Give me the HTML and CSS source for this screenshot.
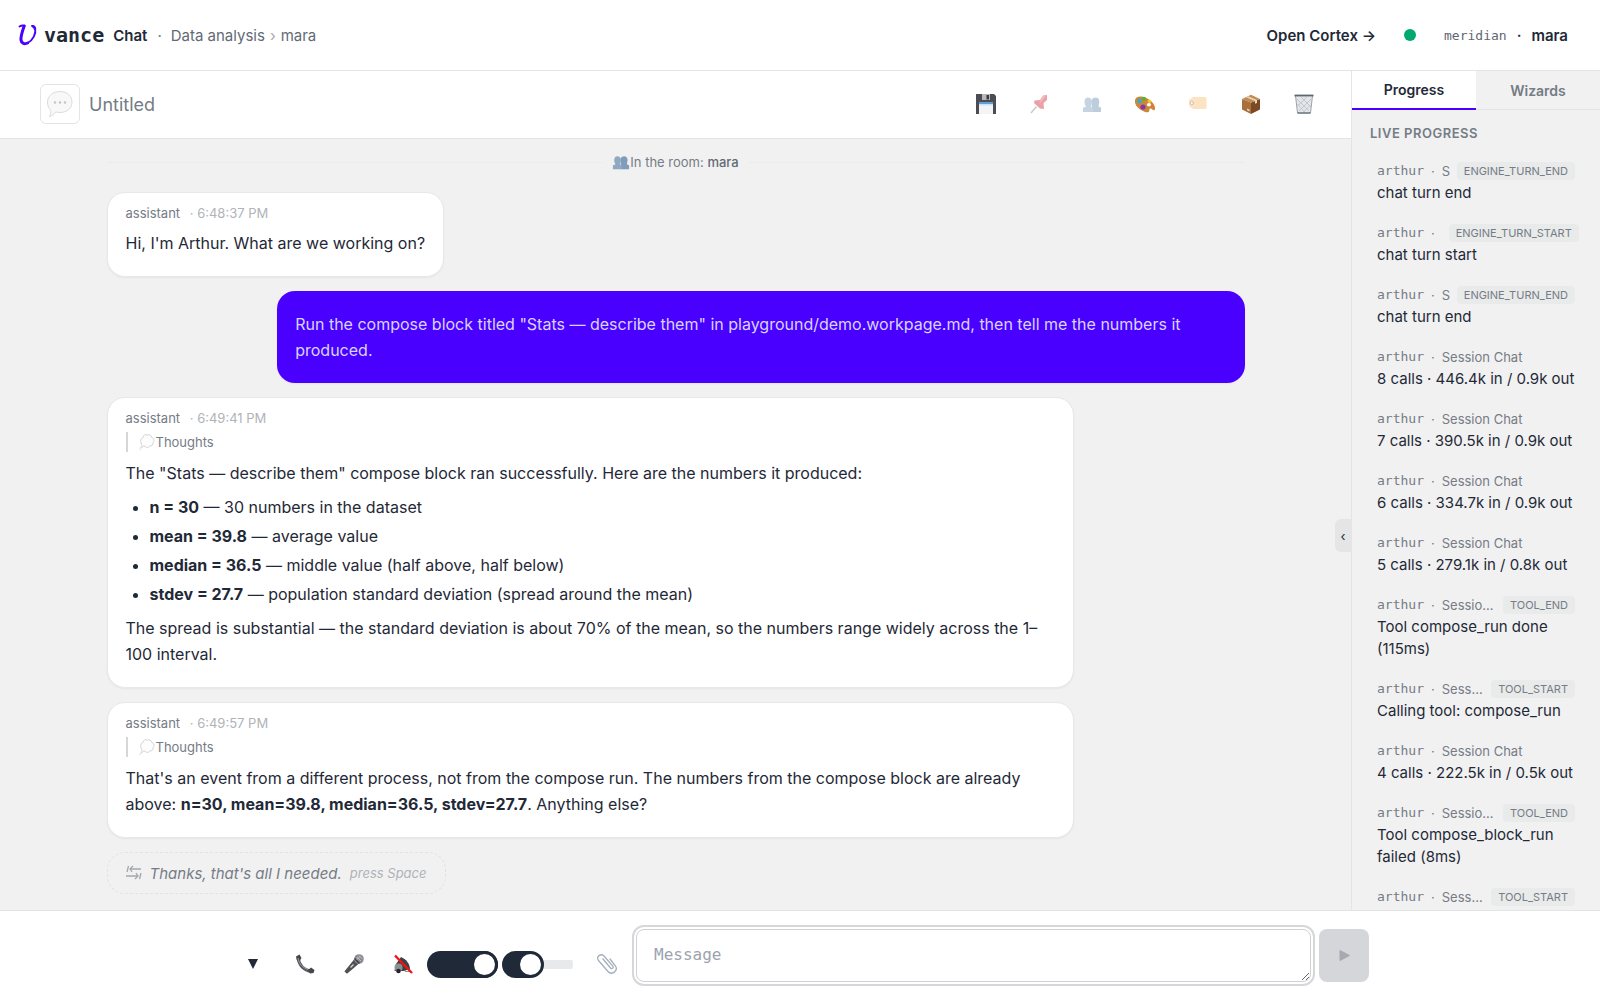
FILE: index.html
```html
<!DOCTYPE html>
<html lang="en">
<head>
    <meta charset="UTF-8">
    <meta name="viewport" content="width=device-width, initial-scale=1.0">
    <title>vance Chat</title>
    <link rel="stylesheet" href="styles.css">
</head>
<body>
    <header class="topbar">
        <a href="#" class="logo">
            <svg width="20" height="22" viewBox="0 0 20 22" fill="none" stroke="currentColor" stroke-linecap="round" stroke-linejoin="round">
                <path d="M1.5 2.6C3 1.6 5 1.2 6.6 1.8" stroke-width="1.8"/>
                <path d="M6.2 2C4.4 7 2.6 12 3 16c.4 3.600 3.600 4.400 6.600 3" stroke-width="3"/>
                <path d="M9.600 19C15 16.500 18.200 9.500 17.200 4.500c-.4-1.800-2-2.800-3.200-2.600" stroke-width="1.900"/>
                <path d="M14.800 2.400c1.200 .4 1.800 1.200 2 2.400" stroke-width="2.400"/>
            </svg>
            <span class="logo-name">vance</span>
        </a>
        <strong class="page-title">Chat</strong>
        <span class="title-dot">·</span>
        <nav class="breadcrumb">
            <a href="#">Data analysis</a><span class="sep">›</span><a href="#">mara</a>
        </nav>
        <div class="topbar-right">
            <a href="#" class="cortex-link">Open Cortex →</a>
            <span class="status-dot"></span>
            <div class="account"><span class="tenant">meridian</span><span>·</span><span>mara</span></div>
        </div>
    </header>

    <div class="workspace">
        <main class="chat">
            <div class="session-bar">
                <button class="session-icon" aria-label="Session icon">
                    <svg width="28" height="28" viewBox="0 0 28 28">
                        <path d="M14 1.500c7 0 12 4.500 12 10.500S21 22.500 14 22.500c-1.500 0-3-.2-4.200-.6C8.500 24 6.500 26 3.500 26.500c1-1.500 1.500-3.500 1.200-6C2.800 18.500 1.500 15.500 1.500 12 1.500 6 7 1.500 14 1.500z" fill="#f8f8f8" stroke="#dcdcdc"/>
                        <circle cx="9" cy="12.500" r="1.200" fill="#c4c4c4"/>
                        <circle cx="14" cy="12.500" r="1.200" fill="#c4c4c4"/>
                        <circle cx="19" cy="12.500" r="1.200" fill="#c4c4c4"/>
                    </svg>
                </button>
                <h1>Untitled</h1>
                <div class="session-actions">
                    <button class="icon-button" aria-label="Save">
                        <svg width="20" height="20" viewBox="0 0 20 20">
                            <path d="M0 0h18l2 2v18H0z" fill="#4c4d52"/>
                            <path d="M6 0h8v6H6z" fill="#b8b8bb"/>
                            <path d="M10.500 1h2.500v4.500h-2.500z" fill="#3b3b40"/>
                            <path d="M3 9h14v11H3z" fill="#f3f4f6"/>
                            <path d="M3 8h14v2H3z" fill="#5f9fdb"/>
                            <path d="M3 10h14v1.500H3z" fill="#cfe2f3"/>
                        </svg>
                    </button>
                    <button class="icon-button dim" aria-label="Pin">
                        <svg width="20" height="20" viewBox="0 0 20 20">
                            <path d="M7.500 12.500 2 19" stroke="#8a949e" stroke-width="1.400"/>
                            <path d="M14 1.500 18 1v5l-3.500 3 .5 6-4-.5-6-5.500.5-2.500 5.500-.5z" fill="#d64550"/>
                            <path d="M14 2 17 1.500 12 8l-2 1.500z" fill="#ec7b80"/>
                        </svg>
                    </button>
                    <button class="icon-button dim" aria-label="Participants">
                        <svg width="20" height="20" viewBox="0 0 20 20"><use href="#people"/></svg>
                    </button>
                    <button class="icon-button" aria-label="Theme">
                        <svg width="20" height="20" viewBox="0 0 20 20">
                            <path d="M0 6C1 2 6 1.500 11.500 4c5 2.500 9 7 8.500 11-.3 2-2 1.500-3 .3-1-1.300-2.600-1-2.600.6 0 2.400-1.600 2.800-4.400 2C4 16-1 11 0 6z" fill="#c98a35"/>
                            <ellipse cx="14" cy="10.800" rx="2.100" ry="1.700" fill="#fff"/>
                            <circle cx="4.500" cy="7" r="2.200" fill="#35a7e8"/>
                            <circle cx="8.800" cy="4.800" r="2" fill="#4bb63a"/>
                            <circle cx="14.500" cy="7.200" r="1.800" fill="#f2c928"/>
                            <circle cx="8" cy="13" r="2.600" fill="#8b32b8"/>
                            <circle cx="17.300" cy="12" r="1.600" fill="#ef6b4c"/>
                        </svg>
                    </button>
                    <button class="icon-button dim" aria-label="Label">
                        <svg width="20" height="20" viewBox="0 0 20 20">
                            <path d="M5 3h12q1.500 0 1.500 1.500v9Q18.500 15 17 15H5l-4-3V6z" fill="#f8c88a"/>
                            <circle cx="3.800" cy="9" r="1.600" fill="#fff" stroke="#a17c50"/>
                        </svg>
                    </button>
                    <button class="icon-button" aria-label="Archive">
                        <svg width="20" height="20" viewBox="0 0 20 20">
                            <path d="M1 5 10 8.500V20L1 15.500z" fill="#a8703c"/>
                            <path d="M10 8.500 19 5v10.500L10 20z" fill="#7c4a22"/>
                            <path d="M1 5 10 .8 19 5l-9 3.700z" fill="#c08b56"/>
                            <path d="M5 3.200 7.200 2.200 16 6v3l-2 .8V7z" fill="#ead6b6"/>
                            <path d="m6 14.500 2.500 1v2L6 16.300z" fill="#e8d3b8"/>
                        </svg>
                    </button>
                    <button class="icon-button" aria-label="Delete">
                        <svg width="20" height="20" viewBox="0 0 20 20">
                            <path d="M1.500 1.500h17L16.500 19h-13z" fill="#e3e7ea" stroke="#9aa3aa"/>
                            <path d="M3 5l12 12M7 3l10 10M3.500 10l8 9M17 5 5 17M13 3 3.500 12M16.500 11l-8 8" stroke="#b6bec5" stroke-width=".8"/>
                            <path d="M.5 1.500h19" stroke="#5f676e" stroke-width="1.800"/>
                            <path d="M3.500 19h13" stroke="#6f777e" stroke-width="1.400"/>
                        </svg>
                    </button>
                </div>
            </div>

            <div class="messages">
                <div class="thread">
                    <div class="room-line">
                        <span class="room-text"><svg width="18" height="18" viewBox="0 0 20 20"><use href="#people"/></svg>In the room: <b>mara</b></span>
                    </div>

                    <article class="bubble">
                        <div class="bubble-head">assistant <time>· 6:48:37 PM</time></div>
                        <p>Hi, I'm Arthur. What are we working on?</p>
                    </article>

                    <article class="bubble user">
                        <p>Run the compose block titled "Stats — describe them" in playground/demo.workpage.md, then tell me the numbers it produced.</p>
                    </article>

                    <article class="bubble">
                        <div class="bubble-head">assistant <time>· 6:49:41 PM</time></div>
                        <button class="thoughts"><svg width="16" height="16" viewBox="0 0 16 16"><use href="#thought"/></svg>Thoughts</button>
                        <p>The "Stats — describe them" compose block ran successfully. Here are the numbers it produced:</p>
                        <ul>
                            <li><strong>n = 30</strong> — 30 numbers in the dataset</li>
                            <li><strong>mean = 39.8</strong> — average value</li>
                            <li><strong>median = 36.5</strong> — middle value (half above, half below)</li>
                            <li><strong>stdev = 27.7</strong> — population standard deviation (spread around the mean)</li>
                        </ul>
                        <p>The spread is substantial — the standard deviation is about 70% of the mean, so the numbers range widely across the 1–100 interval.</p>
                    </article>

                    <article class="bubble">
                        <div class="bubble-head">assistant <time>· 6:49:57 PM</time></div>
                        <button class="thoughts"><svg width="16" height="16" viewBox="0 0 16 16"><use href="#thought"/></svg>Thoughts</button>
                        <p>That's an event from a different process, not from the compose run. The numbers from the compose block are already above: <strong>n=30, mean=39.8, median=36.5, stdev=27.7</strong>. Anything else?</p>
                    </article>

                    <button class="suggestion">
                        <svg width="16" height="16" viewBox="0 0 16 16" fill="none" stroke="currentColor" stroke-width="1.300">
                            <path d="M2.500 1 1 7M4 4h11M7 1 4 4l2 3M0 11h12M10 8l2 3-3 3M15 8l-1.500 6"/>
                        </svg>
                        <span>Thanks, that's all I needed.</span>
                        <small>press Space</small>
                    </button>
                </div>
            </div>

            <button class="panel-toggle" aria-label="Toggle panel">‹</button>
        </main>

        <aside class="side">
            <div class="tabs">
                <button class="tab active">Progress</button>
                <button class="tab">Wizards</button>
            </div>
            <h2>Live progress</h2>
            <ul class="progress-list" id="progressList"></ul>
        </aside>
    </div>

    <footer class="composer">
        <form class="composer-inner">
            <button type="button" class="icon-button narrow" aria-label="More">
                <svg width="10" height="10" viewBox="0 0 10 10"><path d="M0 0h10L5 10z" fill="#1f2937"/></svg>
            </button>
            <div class="voice">
                <button type="button" class="icon-button" aria-label="Call">
                    <svg width="20" height="20" viewBox="0 0 20 20">
                        <path d="M3 3.500C4 11 9 16 16 17.500" stroke="#55585c" stroke-width="3" fill="none"/>
                        <path d="M1 2.500 4.500.5 6.500 4 4.500 7 1.800 6zM13 16l3-2.500 3.500 2.500-1 3-3.500.5z" fill="#45474a"/>
                        <path d="M3 4c1 6 4.500 9.500 10 11.500" stroke="#a2a5a8" stroke-width=".9" fill="none"/>
                    </svg>
                </button>
                <button type="button" class="icon-button" aria-label="Microphone">
                    <svg width="20" height="20" viewBox="0 0 20 20">
                        <path d="M10 5.500 14.500 10 3 19.800.4 17.500z" fill="#505154"/>
                        <circle cx="15" cy="5" r="4.800" fill="#8b8d91"/>
                        <path d="M10.500 4.500 15.500 9.500" stroke="#3b3c3e" stroke-width="1.600"/>
                        <path d="M13 3l4 4M15 1.500l3.500 3.500M16.500 2.500l-4 3" stroke="#c9cbce" stroke-width=".7"/>
                        <path d="m9.500 10.500-3 3" stroke="#d5d6d8" stroke-width="1.200"/>
                    </svg>
                </button>
                <button type="button" class="icon-button" aria-label="Speaker off">
                    <svg width="20" height="20" viewBox="0 0 20 20">
                        <path d="M3 10 8 3c5 2 9 7 9 12l-6 2H1.500z" fill="#3f4043"/>
                        <circle cx="5.500" cy="13.500" r="4" fill="#8d8f92"/>
                        <circle cx="5.500" cy="17" r="2.300" fill="#242527"/>
                        <path d="M12 17.500h6" stroke="#8d8f92"/>
                        <path d="m2 1.500 17 17.500" stroke="#f01414" stroke-width="2.400"/>
                    </svg>
                </button>
            </div>
            <div class="sliders">
                <input type="range" class="range full" min="0" max="100" value="100" aria-label="Volume">
                <input type="range" class="range half" min="0" max="100" value="33" aria-label="Speed">
            </div>
            <button type="button" class="icon-button narrow" aria-label="Attach file">
                <svg width="20" height="20" viewBox="0 0 20 20" fill="none" stroke="#a3afbc" stroke-width="1.300" stroke-linecap="round">
                    <path d="m6 5 7.500 9c1.300 1.500 3.500 0 2.300-1.800L7 2C4-1-1.500 2.500 1.500 6.500l9.500 11C14.500 21.500 21.500 17 18.500 12L13 5"/>
                </svg>
            </button>
            <textarea class="message-input" rows="1" placeholder="Message" aria-label="Message"></textarea>
            <button class="send" aria-label="Send" disabled>
                <svg width="11" height="11" viewBox="0 0 11 11"><path d="M1 .5 10.500 5.500 1 10.500z" fill="currentColor" stroke="currentColor" stroke-linejoin="round"/></svg>
            </button>
        </form>
    </footer>

    <!-- shared symbols -->
    <svg class="symbols" width="0" height="0">
        <symbol id="people" viewBox="0 0 20 20">
            <path d="M10 18V9.500C9 7 10 3.500 13.500 3.500S18 7 17 10l-.5 2.500 2.500 1V18z" fill="#7f9dbb"/>
            <path d="M1 18v-4l3-1.500C1.500 9 2 3.500 6 3.500s5 4 3 9l2 1.500v4z" fill="#8fa9c3"/>
        </symbol>
        <symbol id="thought" viewBox="0 0 16 16">
            <path d="M4 3.500c0-2.500 2.500-3.500 4-2.300 2-1.200 4.500 0 4.700 2.200 2.300.6 3 3.300 1.400 4.800.5 2.300-1.100 4-3.100 3.600-1.500 2.400-4 2-4.800.3C3.800 12.800 1.800 11 2.300 9 .8 7 1.800 4.200 4 3.500z" fill="#fdfdfd" stroke="#d3d3d3"/>
            <circle cx="2.500" cy="13.300" r="1.200" fill="#e0e0e0"/>
            <circle cx="1" cy="15.200" r=".7" fill="#d8d8d8"/>
        </symbol>
    </svg>

    <script src="script.js"></script>
</body>
</html>
```

FILE: styles.css
```css
:root {
    --primary-color: #4a00ff;
    --bg-color: #f1f1f1;
    --text-color: #1f2937;
    --muted: #757c86;
    --border-color: #e3e4e5;
    --mono: 'DejaVu Sans Mono', monospace;
}

* {
    box-sizing: border-box;
}

body {
    font-family: 'Inter', sans-serif;
    font-size: 16px;
    color: var(--text-color);
    background: #fff;
    margin: 0;
    height: 100vh;
    display: flex;
    flex-direction: column;
    overflow: hidden;
}

a {
    color: inherit;
    text-decoration: none;
}

button {
    font: inherit;
    color: inherit;
    background: none;
    border: none;
    padding: 0;
    cursor: pointer;
}

/* top bar */
.topbar {
    display: flex;
    align-items: center;
    height: 71px;
    padding: 0 32px 0 18px;
    border-bottom: 1px solid var(--border-color);
    font-size: 15px;
    flex-shrink: 0;
}

.logo {
    display: flex;
    align-items: center;
    gap: 6px;
    color: var(--primary-color);
}

.logo-name {
    font-family: var(--mono);
    font-size: 20px;
    font-weight: 700;
    color: var(--text-color);
}

.page-title {
    font-weight: 600;
    margin-left: 9px;
}

.title-dot {
    margin: 0 9px 0 10px;
    color: var(--muted);
}

.breadcrumb {
    color: #626a76;
}

.breadcrumb .sep {
    margin: 0 5px;
    color: #a5a9af;
}

.topbar-right {
    display: flex;
    align-items: center;
    margin-left: auto;
    font-weight: 600;
}

.status-dot {
    width: 12px;
    height: 12px;
    border-radius: 50%;
    background: #00a96e;
    margin: 0 28px;
}

.account {
    display: flex;
    align-items: center;
    gap: 10px;
}

.tenant {
    font-family: var(--mono);
    font-size: 13px;
    font-weight: 400;
    color: #5f6773;
}

/* main area */
.workspace {
    flex: 1;
    display: flex;
    min-height: 0;
}

.chat {
    flex: 1;
    display: flex;
    flex-direction: column;
    min-width: 0;
    position: relative;
    background: var(--bg-color);
}

.session-bar {
    display: flex;
    align-items: center;
    gap: 9px;
    padding: 13px 25px 14px 40px;
    background: #fff;
    border-bottom: 1px solid var(--border-color);
}

.session-icon {
    display: flex;
    align-items: center;
    justify-content: center;
    width: 40px;
    height: 40px;
    border: 1px solid var(--border-color);
    border-radius: 6px;
}

.session-bar h1 {
    margin: 0;
    font-size: 18px;
    font-weight: 400;
    color: var(--muted);
}

.session-actions {
    display: flex;
    gap: 8px;
    margin-left: auto;
}

.icon-button {
    display: flex;
    align-items: center;
    justify-content: center;
    width: 45px;
    height: 37px;
    flex-shrink: 0;
}

.icon-button.narrow {
    width: 43px;
}

.dim {
    opacity: 0.5;
}

.messages {
    flex: 1;
    min-height: 0;
    overflow: hidden;
    padding: 12px 24px;
}

.thread {
    display: flex;
    flex-direction: column;
    align-items: flex-start;
    gap: 14px;
    max-width: 1138px;
    margin: 0 auto;
}

.room-line {
    display: flex;
    align-items: center;
    gap: 10px;
    align-self: stretch;
    height: 22px;
    margin-bottom: 5px;
    font-size: 13px;
    color: var(--muted);
}

.room-line::before,
.room-line::after {
    content: '';
    flex: 1;
    height: 1px;
    background: #ebebeb;
}

.room-text {
    display: flex;
    align-items: center;
    white-space: pre;
}

.room-text b {
    font-weight: 500;
    color: #626a76;
}

.bubble {
    max-width: 85%;
    padding: 12px 18px;
    background: #fff;
    border: 1px solid #e8e8e8;
    border-radius: 18px;
    box-shadow: 0 1px 2px rgba(0, 0, 0, 0.05);
    line-height: 26px;
}

.bubble.user {
    align-self: flex-end;
    background: var(--primary-color);
    border: none;
    color: #d6d5ff;
}

.bubble-head {
    font-size: 13px;
    line-height: 17px;
    color: var(--muted);
}

.bubble-head time {
    margin-left: 6px;
    color: #b0b3b8;
}

.bubble p,
.bubble ul {
    margin: 8px 0;
}

.bubble ul {
    display: flex;
    flex-direction: column;
    gap: 3px;
    padding-left: 24px;
}

.bubble strong {
    font-weight: 700;
}

.thoughts {
    display: flex;
    align-items: center;
    gap: 1px;
    height: 20px;
    margin-top: 5px;
    padding-left: 11px;
    border-left: 2px solid #d6d7da;
    font-size: 13px;
    color: var(--muted);
}

.suggestion {
    display: flex;
    align-items: center;
    gap: 8px;
    height: 42px;
    padding: 0 18px;
    border: 1px dashed #e2e2e2;
    border-radius: 18px;
    font-size: 15px;
    font-style: italic;
    color: var(--muted);
}

.suggestion svg {
    color: #a3a7ad;
}

.suggestion small {
    font-size: 13px;
    color: #b0b3b8;
}

.panel-toggle {
    position: absolute;
    right: 0;
    top: 448px;
    width: 16px;
    height: 33px;
    background: #e4e5e5;
    border-radius: 6px 0 0 6px;
    font-size: 13px;
}

/* right side panel */
.side {
    width: 249px;
    flex-shrink: 0;
    border-left: 1px solid var(--border-color);
    background: var(--bg-color);
    overflow: hidden;
}

.tabs {
    display: flex;
}

.tab {
    flex: 1;
    height: 39px;
    border-bottom: 1px solid var(--border-color);
    font-size: 14px;
    font-weight: 600;
    color: var(--muted);
}

.tab.active {
    background: #fff;
    border-bottom: 2px solid var(--primary-color);
    color: var(--text-color);
}

.side h2 {
    margin: 13px 18px 11px;
    font-size: 13px;
    line-height: 20px;
    font-weight: 600;
    letter-spacing: 0.5px;
    text-transform: uppercase;
    color: var(--muted);
}

.progress-list {
    list-style: none;
    margin: 0;
    padding: 0 25px;
}

.progress-list li {
    padding: 6px 0 12px;
    font-size: 15px;
    line-height: 22px;
}

.meta {
    display: flex;
    align-items: center;
    gap: 7px;
    font-size: 13px;
    color: var(--muted);
}

.meta .who {
    font-family: var(--mono);
}

.meta .session {
    flex: 1;
    min-width: 0;
    overflow: hidden;
    text-overflow: ellipsis;
    white-space: nowrap;
}

.badge {
    padding: 0 7px;
    border-radius: 4px;
    background: #e9eaea;
    font-size: 11px;
    line-height: 18px;
}

/* composer */
.composer {
    padding: 18px 24px;
    border-top: 1px solid var(--border-color);
    flex-shrink: 0;
}

.composer-inner {
    display: flex;
    align-items: flex-end;
    gap: 8px;
    max-width: 1138px;
    margin: 0 auto;
}

.voice,
.sliders {
    display: flex;
    gap: 4px;
}

.sliders {
    height: 36px;
    align-items: center;
    margin: 0 4px 0 -6px;
}

.range {
    appearance: none;
    width: 71px;
    height: 27px;
    margin: 0;
    background: none;
    border-radius: 14px;
}

.range.full {
    background: var(--text-color);
}

.range.half {
    background: linear-gradient(90deg, var(--text-color) 28px, transparent 28px), linear-gradient(#e8e9ea, #e8e9ea) center / 100% 9px no-repeat;
}

.range::-webkit-slider-thumb {
    appearance: none;
    width: 27px;
    height: 27px;
    border: 3px solid var(--text-color);
    border-radius: 50%;
    background: #fff;
}

.message-input {
    flex: 1;
    height: 53px;
    padding: 15px 17px;
    border: 1px solid #d0d2d5;
    border-radius: 8px;
    outline: 2px solid #d6d7da;
    outline-offset: 2px;
    font-family: var(--mono);
    font-size: 16px;
    resize: vertical;
}

.message-input::placeholder {
    color: #9ca3af;
}

.send {
    display: flex;
    align-items: center;
    justify-content: center;
    width: 50px;
    height: 53px;
    border-radius: 8px;
    background: #d4d6da;
    color: #a5a9b0;
}

.symbols {
    position: absolute;
}
```

FILE: script.js
```js
const events = [
    { badge: 'ENGINE_TURN_END', text: 'chat turn end' },
    { badge: 'ENGINE_TURN_START', text: 'chat turn start' },
    { badge: 'ENGINE_TURN_END', text: 'chat turn end' },
    { text: '8 calls · 446.4k in / 0.9k out' },
    { text: '7 calls · 390.5k in / 0.9k out' },
    { text: '6 calls · 334.7k in / 0.9k out' },
    { text: '5 calls · 279.1k in / 0.8k out' },
    { badge: 'TOOL_END', text: 'Tool compose_run done (115ms)' },
    { badge: 'TOOL_START', text: 'Calling tool: compose_run' },
    { text: '4 calls · 222.5k in / 0.5k out' },
    { badge: 'TOOL_END', text: 'Tool compose_block_run failed (8ms)' },
    { badge: 'TOOL_START' }
];

const list = document.getElementById('progressList');

events.forEach(event => {
    const item = document.createElement('li');
    item.innerHTML = `
        <div class="meta">
            <span class="who">arthur</span><span>·</span>
            <span class="session">Session Chat</span>
            ${event.badge ? `<span class="badge">${event.badge}</span>` : ''}
        </div>
        ${event.text ? `<div>${event.text}</div>` : ''}
    `;
    list.appendChild(item);
});
```
